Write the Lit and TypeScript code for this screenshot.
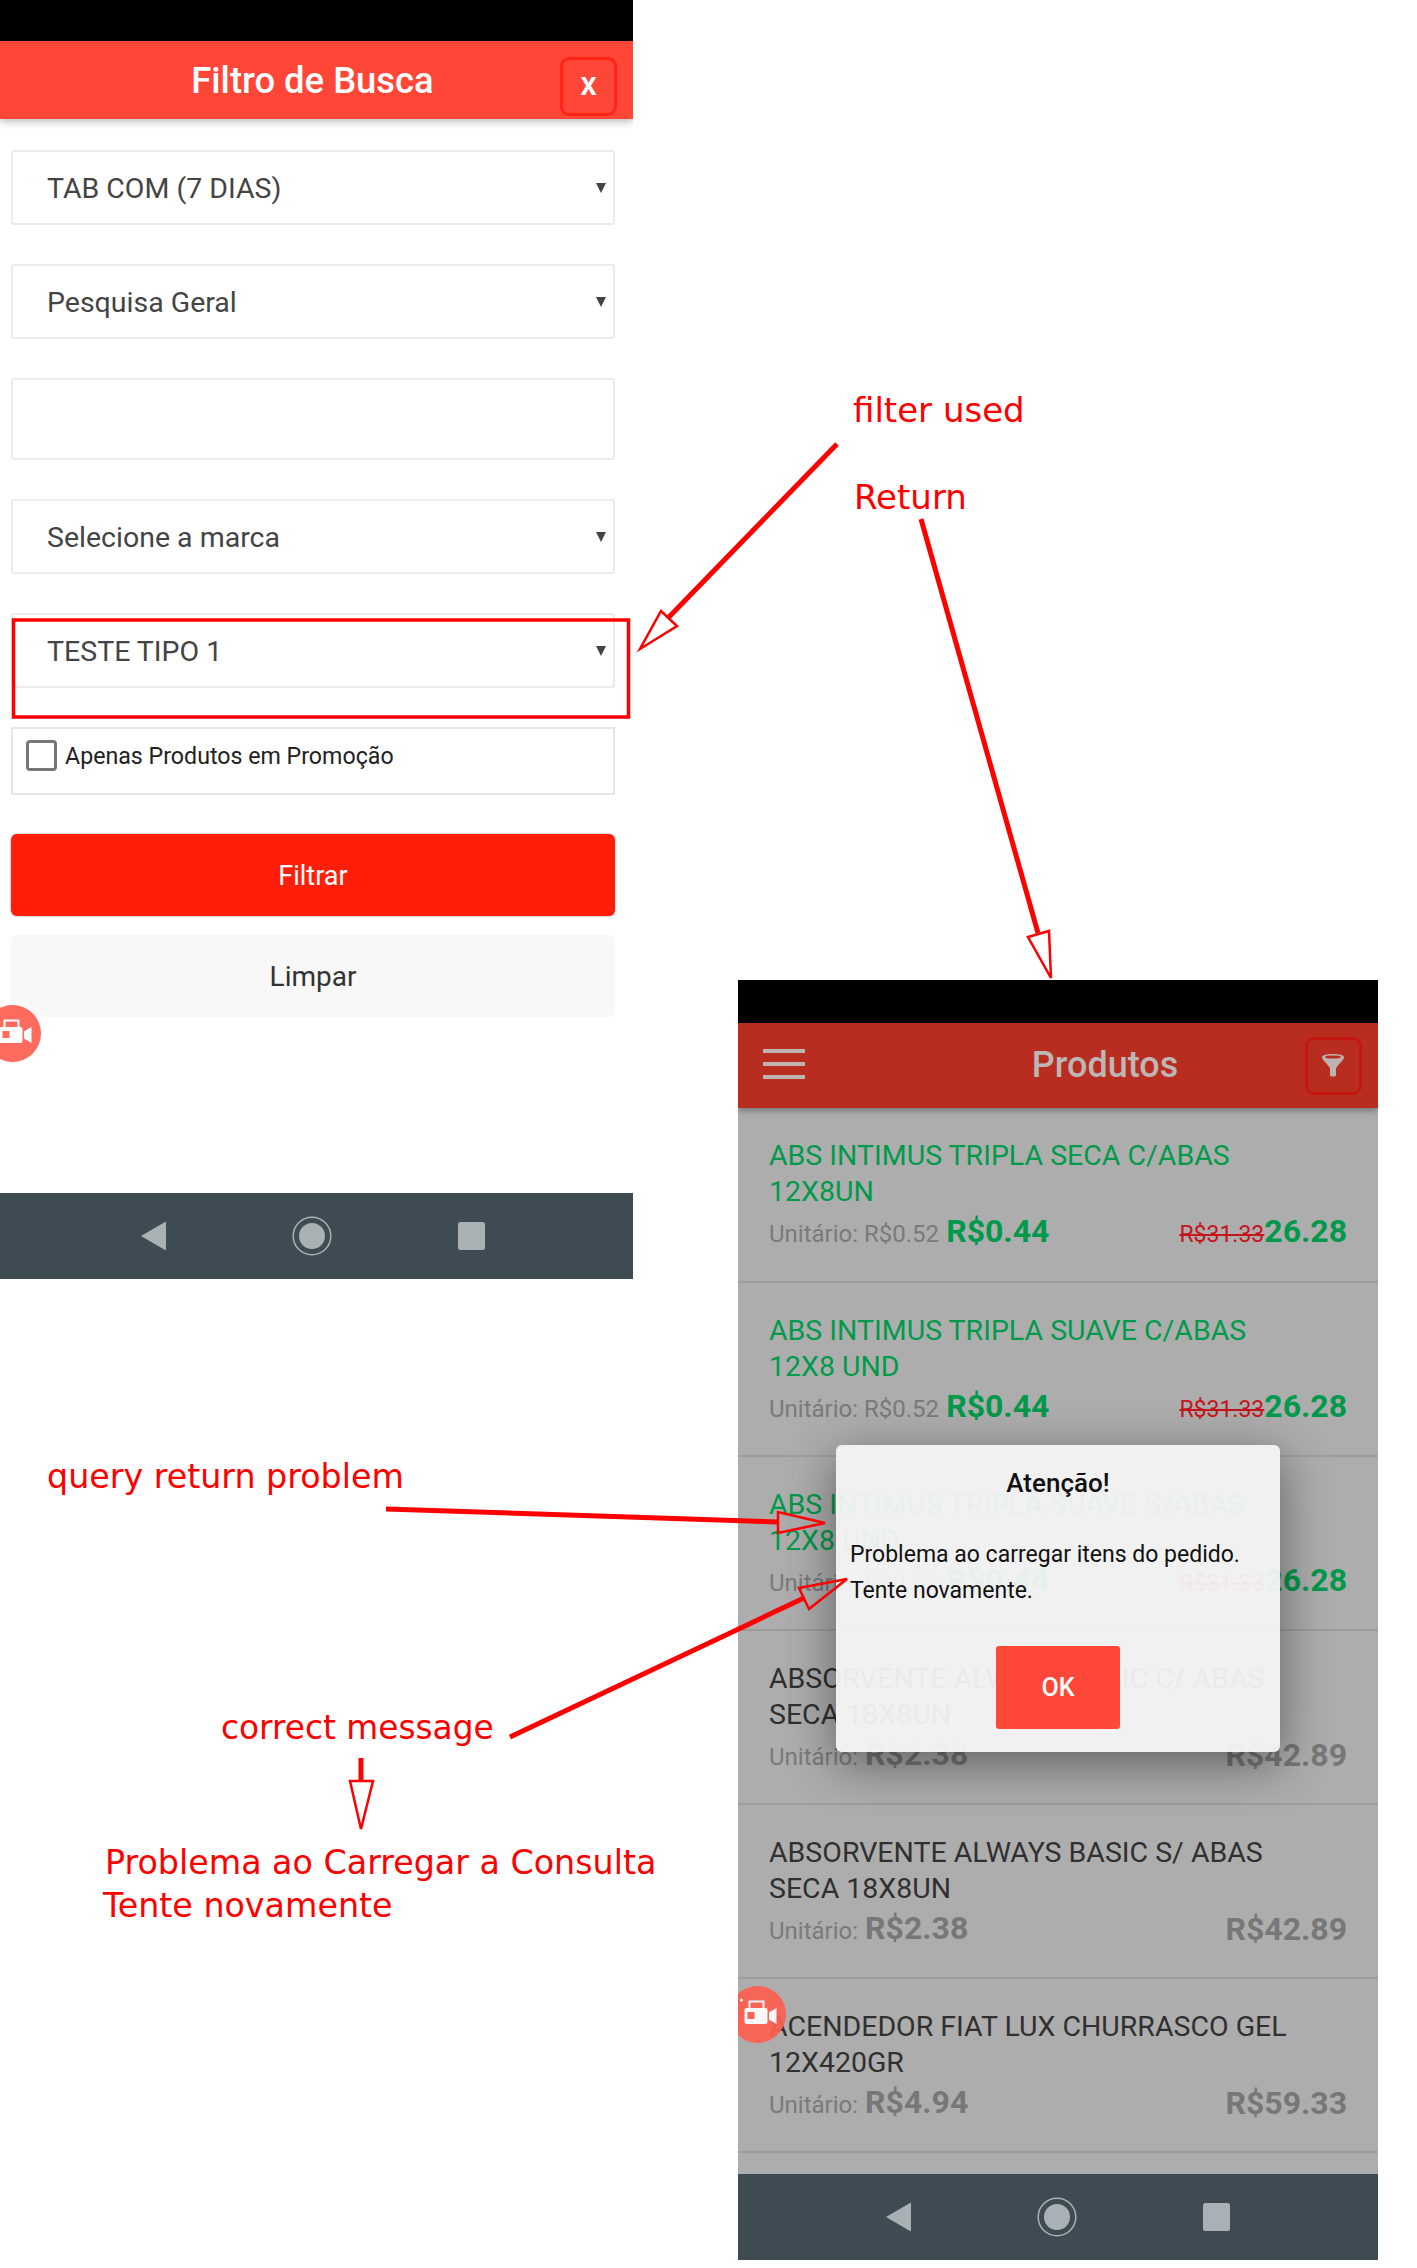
import { LitElement, css, html, svg } from "lit";
import { customElement } from "lit/decorators.js";

// soft keys at the bottom of both phones
@customElement("android-nav")
export class AndroidNav extends LitElement {
  static styles = css`
    :host {
      display: flex;
      align-items: center;
      gap: 126px;
      height: 86px;
      padding-left: var(--nav-inset, 140px);
      background: #3f4b52;
      box-sizing: border-box;
    }
    svg {
      display: block;
      fill: #aab1b5;
    }
  `;

  render() {
    return html`
      <svg width="26" height="30" viewBox="0 0 26 30"><path d="M25 1 1 15l24 14c1 .5 1-.5 1-1V2c0-1 0-1.500-1-1z" /></svg>
      <svg width="40" height="40" viewBox="0 0 40 40">
        <circle cx="20" cy="20" r="18.800" fill="none" stroke="#aab1b5" stroke-width="1.500" />
        <circle cx="20" cy="20" r="13" />
      </svg>
      <svg width="27" height="28" viewBox="0 0 27 28"><rect width="27" height="28" rx="2.500" /></svg>
    `;
  }
}

// screen recorder floating button
@customElement("record-bubble")
export class RecordBubble extends LitElement {
  static styles = css`
    :host {
      display: block;
      position: absolute;
      width: 57px;
      height: 57px;
      border-radius: 50%;
      background: #ff5f50;
      opacity: 0.92;
    }
    svg {
      display: block;
    }
  `;

  render() {
    return html`
      <svg width="57" height="57" viewBox="-28.500 -28.500 57 57" fill="#fff">
        <circle cx="-16" cy="-14.500" r="1.500" />
        <path d="M-8-6.500V-13H6v6.500" fill="none" stroke="#fff" stroke-width="2" />
        <rect x="-13" y="-6.500" width="23" height="16" rx="2" />
        <rect x="-10" y="-2.500" width="7" height="7" fill="#ff5f50" />
        <path d="M19-6.500v16l-7.500-4.500v-7z" />
      </svg>
    `;
  }
}

const products = [
  { lines: ["ABS INTIMUS TRIPLA SECA C/ABAS", "12X8UN"], unit: "Unitário: R$0.52", price: "R$0.44", old: "R$31.33", total: "26.28" },
  { lines: ["ABS INTIMUS TRIPLA SUAVE C/ABAS", "12X8 UND"], unit: "Unitário: R$0.52", price: "R$0.44", old: "R$31.33", total: "26.28" },
  { lines: ["ABS INTIMUS TRIPLA SUAVE S/ABAS", "12X8 UND"], unit: "Unitário: R$0.52", price: "R$0.44", old: "R$31.33", total: "26.28" },
  { lines: ["ABSORVENTE ALWAYS BASIC C/ ABAS", "SECA 18X8UN"], unit: "Unitário:", price: "R$2.38", total: "R$42.89" },
  { lines: ["ABSORVENTE ALWAYS BASIC S/ ABAS", "SECA 18X8UN"], unit: "Unitário:", price: "R$2.38", total: "R$42.89" },
  { lines: ["ACENDEDOR FIAT LUX CHURRASCO GEL", "12X420GR"], unit: "Unitário:", price: "R$4.94", total: "R$59.33" },
];

const selects = [
  { label: "TAB COM (7 DIAS)" },
  { label: "Pesquisa Geral" },
  { label: "" },
  { label: "Selecione a marca" },
  { label: "TESTE TIPO 1" },
];

@customElement("app-root")
export class AppRoot extends LitElement {
  static styles = css`
    :host {
      display: block;
      position: relative;
      width: 1417px;
      height: 2268px;
      background: #fff;
      font-family: Roboto, "Liberation Sans", sans-serif;
      overflow: hidden;
    }

    .phone {
      position: absolute;
      top: 0;
      display: flex;
      flex-direction: column;
      overflow: hidden;
    }
    .status {
      background: #000;
      flex: none;
    }
    android-nav {
      flex: none;
      margin-top: auto;
    }

    /* filter screen */
    .filter {
      left: 0;
      width: 633px;
      height: 1279px;
      --nav-inset: 140px;
    }
    .filter .status {
      height: 41px;
    }
    .filter-head {
      position: relative;
      flex: none;
      display: flex;
      align-items: center;
      justify-content: center;
      height: 78px;
      background: #ff4637;
      box-shadow: 0 3px 7px rgba(0, 0, 0, 0.25);
      color: #fff;
      font-size: 36.400px;
      font-weight: 500;
      padding-right: 8px;
      box-sizing: border-box;
    }
    .close {
      position: absolute;
      right: 16px;
      top: 16px;
      width: 57px;
      height: 59px;
      box-sizing: border-box;
      border: 3px solid #ff2416;
      border-radius: 9px;
      display: flex;
      align-items: center;
      justify-content: center;
      font-size: 33px;
      font-weight: 500;
      line-height: 1;
      padding-bottom: 6px;
    }
    .form {
      display: flex;
      flex-direction: column;
      padding: 31px 18px 0 11px;
    }
    .field {
      display: flex;
      align-items: flex-start;
      justify-content: space-between;
      box-sizing: border-box;
      height: 75px;
      margin-bottom: 39px;
      border: 2px solid #ebebeb;
      border-radius: 3px;
      padding: 19px 7px 0 34px;
      color: #444;
      font-size: 28.500px;
      line-height: 36px;
    }
    .field.text {
      height: 82px;
    }
    .caret {
      width: 0;
      height: 0;
      margin-top: 12px;
      border-left: 5px solid transparent;
      border-right: 5px solid transparent;
      border-top: 10px solid #444;
    }
    .promo {
      display: flex;
      align-items: flex-start;
      gap: 8px;
      box-sizing: border-box;
      height: 68px;
      margin-bottom: 39px;
      border: 2px solid #e6e6e6;
      padding: 11px 0 0 13px;
      color: #222;
      font-size: 23.200px;
      line-height: 32px;
    }
    .check {
      width: 31px;
      height: 31px;
      box-sizing: border-box;
      border: 3px solid #777;
      border-radius: 4px;
    }
    .btn {
      display: flex;
      align-items: center;
      justify-content: center;
      height: 82px;
      border-radius: 6px;
      font-size: 27px;
      box-sizing: border-box;
    }
    .btn.primary {
      background: #ff1e0a;
      box-shadow: 0 0 2px rgba(0, 0, 0, 0.5);
      color: #fff;
      margin-bottom: 19px;
      padding-top: 2px;
    }
    .btn.ghost {
      background: #f8f8f8;
      color: #333;
      font-size: 28px;
    }
    .bubble-filter {
      left: -16px;
      top: 1005px;
    }

    /* product list behind the alert */
    .products {
      left: 738px;
      top: 980px;
      width: 640px;
      height: 1280px;
      --nav-inset: 147px;
    }
    .products .status {
      height: 43px;
    }
    .products-head {
      flex: none;
      display: flex;
      align-items: center;
      justify-content: space-between;
      height: 85px;
      padding: 0 16px 0 25px;
      background: #b92d20;
      box-shadow: 0 3px 6px rgba(0, 0, 0, 0.3);
      color: #bcb6b4;
      font-size: 36px;
      font-weight: 500;
      position: relative;
      box-sizing: border-box;
    }
    .head-title {
      margin: 0 0 2px 100px;
    }
    .burger {
      display: flex;
      flex-direction: column;
      gap: 9px;
      width: 42px;
      margin-bottom: 4px;
    }
    .burger i {
      display: block;
      height: 4px;
      background: #bdb2b0;
    }
    .filter-btn {
      display: flex;
      align-items: center;
      justify-content: center;
      width: 57px;
      height: 58px;
      box-sizing: border-box;
      border: 3px solid #c41714;
      border-radius: 9px;
    }
    .list {
      flex: 1;
      min-height: 0;
      overflow: hidden;
      background: #adadad;
    }
    .item {
      box-sizing: border-box;
      height: 174px;
      padding: 30px 31px 0;
      border-bottom: 2px solid #9d9d9d;
      color: #303030;
      font-size: 28.500px;
      line-height: 36px;
    }
    .item:first-child {
      height: 175px;
    }
    .item.promoted {
      color: #009a4b;
    }
    .title div {
      white-space: nowrap;
    }
    .row {
      display: flex;
      align-items: center;
      justify-content: space-between;
      height: 45px;
    }
    .unit {
      color: #7a7a7a;
      font-size: 24px;
    }
    .price,
    .total {
      color: #777;
      font-size: 32px;
      font-weight: 700;
    }
    .promoted .price,
    .promoted .total {
      color: #00994c;
    }
    .old {
      color: #c4161c;
      font-size: 23px;
      text-decoration: line-through;
    }
    .bubble-products {
      left: -9px;
      top: 1006px;
    }
    .alert {
      position: absolute;
      left: 98px;
      top: 465px;
      width: 444px;
      height: 307px;
      box-sizing: border-box;
      display: flex;
      flex-direction: column;
      align-items: center;
      padding: 20px 14px 0;
      border-radius: 6px;
      background: rgba(245, 245, 245, 0.94);
      box-shadow: 0 12px 50px rgba(0, 0, 0, 0.45);
      color: #111;
      font-size: 23px;
      line-height: 36px;
    }
    .alert h2 {
      margin: 0 0 36px;
      font-size: 26px;
      font-weight: 500;
      line-height: 36px;
    }
    .alert p {
      margin: 0 0 37px;
      align-self: stretch;
    }
    .ok {
      display: flex;
      align-items: center;
      justify-content: center;
      width: 124px;
      height: 83px;
      border-radius: 3px;
      background: #ff4838;
      color: #fff;
      font-size: 25px;
      font-weight: 500;
    }

    /* red notes painted over the two screens */
    .notes {
      position: absolute;
      inset: 0;
    }
    .notes text {
      fill: #fe0000;
      font-family: "DejaVu Sans", sans-serif;
      font-size: 33.300px;
    }
    .notes text.wide {
      font-size: 34px;
    }
    .notes text.tight {
      font-size: 32.800px;
    }
    .notes .line {
      fill: none;
      stroke: #fe0000;
      stroke-width: 5;
    }
    .notes .frame {
      fill: none;
      stroke: #fe0000;
      stroke-width: 3.500;
    }
    .notes .head {
      fill: none;
      stroke: #fe0000;
      stroke-width: 2.500;
    }
  `;

  renderProduct(p: (typeof products)[number]) {
    return html`
      <div class="item ${p.old ? "promoted" : ""}">
        <div class="title">${p.lines.map((l) => html`<div>${l}</div>`)}</div>
        <div class="row">
          <span><span class="unit">${p.unit}</span> <span class="price">${p.price}</span></span>
          <span>${p.old ? html`<span class="old">${p.old}</span>` : ""}<span class="total">${p.total}</span></span>
        </div>
      </div>
    `;
  }

  renderNotes() {
    return svg`
      <rect class="frame" x="13.500" y="620" width="615" height="97" />
      <text class="wide" x="853" y="422">filter used</text>
      <text class="wide" x="854" y="509">Return</text>
      <text x="47" y="1488">query return problem</text>
      <text class="tight" x="221" y="1739">correct message</text>
      <text x="105" y="1874">Problema ao Carregar a Consulta</text>
      <text x="103" y="1917">Tente novamente</text>
      <path class="line" d="M837 444 668 618" />
      <path class="head" d="M661 611 677 626 640 649Z" />
      <path class="line" d="M921 519 1038 933" />
      <path class="head" d="M1028 937 1049 931 1051 978Z" />
      <path class="line" d="M386 1509 778 1522" />
      <path class="head" d="M778 1512 778 1533 825 1523Z" />
      <path class="line" d="M510 1737 804 1598" />
      <path class="head" d="M799 1588 809 1609 847 1579Z" />
      <path class="line" d="M361 1758V1781" />
      <path class="head" d="M350 1781H373L361 1829Z" />
    `;
  }

  render() {
    return html`
      <section class="phone filter">
        <div class="status"></div>
        <header class="filter-head">
          Filtro de Busca
          <span class="close">x</span>
        </header>
        <div class="form">
          ${selects.map((s) =>
            s.label
              ? html`<div class="field"><span>${s.label}</span><span class="caret"></span></div>`
              : html`<div class="field text"></div>`
          )}
          <label class="promo"><span class="check"></span>Apenas Produtos em Promoção</label>
          <div class="btn primary">Filtrar</div>
          <div class="btn ghost">Limpar</div>
        </div>
        <android-nav></android-nav>
        <record-bubble class="bubble-filter"></record-bubble>
      </section>

      <section class="phone products">
        <div class="status"></div>
        <header class="products-head">
          <span class="burger"><i></i><i></i><i></i></span>
          <span class="head-title">Produtos</span>
          <span class="filter-btn">
            <svg width="24" height="24" viewBox="0 0 24 24">
              <path d="M1 3C1-1 23-1 23 3c0 2-2 4-4 6l-4 5v7c0 2-6 2-6 0v-7L5 9C3 7 1 5 1 3z" fill="#bdb2b0" />
              <ellipse cx="12" cy="3" rx="8" ry="1.600" fill="#b92d20" />
            </svg>
          </span>
        </header>
        <div class="list">${products.map((p) => this.renderProduct(p))}</div>
        <android-nav></android-nav>
        <record-bubble class="bubble-products"></record-bubble>
        <div class="alert">
          <h2>Atenção!</h2>
          <p>Problema ao carregar itens do pedido.<br />Tente novamente.</p>
          <div class="ok">OK</div>
        </div>
      </section>

      <svg class="notes" width="1417" height="2268" viewBox="0 0 1417 2268">${this.renderNotes()}</svg>
    `;
  }
}
